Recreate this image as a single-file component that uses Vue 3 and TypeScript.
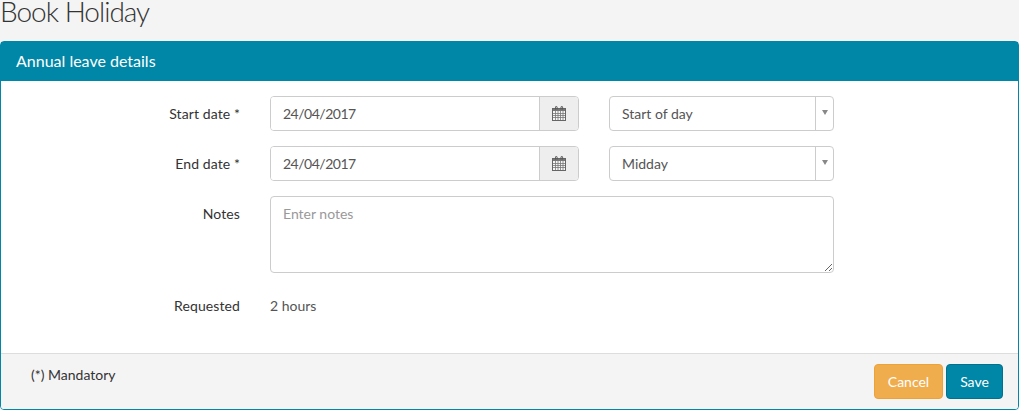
<script setup lang="ts">
const rows = [
  { label: 'Start date *', date: '24/04/2017', part: 'Start of day' },
  { label: 'End date *', date: '24/04/2017', part: 'Midday' },
]
</script>

<template>
  <div class="page">
    <h1 class="title">Book Holiday</h1>
    <section class="panel">
      <header class="head">Annual leave details</header>
      <div class="body">
        <div v-for="r in rows" :key="r.label" class="row">
          <label class="lbl">{{ r.label }}</label>
          <div class="date">
            <input class="date-input" :value="r.date" />
            <span class="addon">
              <svg width="14" height="15" viewBox="0 0 14 15" aria-hidden="true">
                <rect x="0.5" y="2.5" width="13" height="12" fill="#f6f6f6" stroke="#666" />
                <rect x="1" y="3" width="12" height="2" fill="#777" />
                <path d="M1 7.5h12M1 9.5h12M1 11.5h12M3.5 5v9M6 5v9M8.5 5v9M11 5v9" stroke="#777" stroke-width="0.8" fill="none" />
                <path d="M3.5 3.5V1.2a.8.8 0 0 1 1.6 0V3.5M9 3.5V1.2a.8.8 0 0 1 1.6 0V3.5" stroke="#555" stroke-width="1" fill="none" />
              </svg>
            </span>
          </div>
          <div class="sel">
            <span class="sel-text">{{ r.part }}</span>
            <span class="sel-arrow"><i class="tri"></i></span>
          </div>
        </div>
        <div class="row notes-row">
          <label class="lbl">Notes</label>
          <textarea class="notes" placeholder="Enter notes"></textarea>
        </div>
        <div class="row req-row">
          <label class="lbl">Requested</label>
          <span class="val">2 hours</span>
        </div>
      </div>
      <footer class="foot">
        <span class="mand">(*) Mandatory</span>
        <div class="btns">
          <button class="btn cancel" type="button">Cancel</button>
          <button class="btn save" type="button">Save</button>
        </div>
      </footer>
    </section>
  </div>
</template>

<style>
html, body { margin: 0; background: #f4f4f4; }
</style>

<style scoped>
.page {
  width: 1019px;
  height: 410px;
  overflow: hidden;
  background: #f4f4f4;
  font-family: Lato, "Liberation Sans", sans-serif;
  font-size: 14px;
  color: #333;
}
.title {
  margin: 0;
  height: 41px;
  font-size: 28px;
  font-weight: 300;
  letter-spacing: -1px;
  line-height: 23px;
  color: #333;
}
.panel {
  height: 369px;
  box-sizing: border-box;
  border: 1px solid #0086a6;
  border-radius: 4px;
  background: #fff;
  display: flex;
  flex-direction: column;
}
.head {
  height: 39px;
  background: #0086a6;
  color: #fff;
  font-size: 16px;
  line-height: 38px;
  padding-left: 15px;
  flex: none;
}
.body {
  flex: 1;
  padding-top: 15px;
}
.row {
  display: grid;
  grid-template-columns: 239px 309px 225px;
  column-gap: 30px;
  margin-bottom: 15px;
  height: 35px;
  align-items: center;
}
.lbl {
  text-align: right;
  letter-spacing: 0.1px;
  color: #333;
}
.date {
  display: flex;
  height: 35px;
  box-sizing: border-box;
  border: 1px solid #ccc;
  border-radius: 4px;
  overflow: hidden;
}
.date-input {
  flex: 1;
  min-width: 0;
  border: 0;
  outline: 0;
  padding: 0 12px;
  font: inherit;
  letter-spacing: -0.5px;
  color: #555;
  background: #fff;
}
.addon {
  width: 38px;
  flex: none;
  border-left: 1px solid #ccc;
  background: #eee;
  display: flex;
  align-items: center;
  justify-content: center;
}
.sel {
  display: flex;
  height: 35px;
  box-sizing: border-box;
  border: 1px solid #ccc;
  border-radius: 4px;
  background: #fff;
}
.sel-text {
  flex: 1;
  padding-left: 12px;
  line-height: 33px;
  color: #555;
}
.sel-arrow {
  width: 17px;
  border-left: 1px solid #ccc;
  display: flex;
  align-items: center;
  justify-content: center;
}
.tri {
  width: 0;
  height: 0;
  border-left: 3px solid transparent;
  border-right: 3px solid transparent;
  border-top: 5px solid #888;
  margin-top: -3px;
}
.notes-row {
  height: 77px;
  align-items: start;
  margin-bottom: 0;
}
.notes-row .lbl { padding-top: 9px; }
.notes {
  grid-column: 2 / span 2;
  width: 100%;
  height: 77px;
  box-sizing: border-box;
  border: 1px solid #ccc;
  border-radius: 4px;
  padding: 8px 12px;
  font: inherit;
  color: #555;
  outline: 0;
  margin: 0;
  display: block;
}
.notes::placeholder { color: #999; opacity: 1; }
.req-row {
  margin: 22px 0 0;
  height: 20px;
}
.val { color: #555; }
.foot {
  height: 56px;
  flex: none;
  box-sizing: border-box;
  border-top: 1px solid #ddd;
  background: #f4f4f4;
  border-radius: 0 0 3px 3px;
  display: flex;
  justify-content: space-between;
  padding: 10px 15px 0 30px;
}
.mand { line-height: 22px; color: #333; }
.btns { display: flex; gap: 3px; }
.btn {
  height: 35px;
  box-sizing: border-box;
  border-radius: 4px;
  border: 1px solid;
  color: #fff;
  font: inherit;
  padding: 0 12px;
}
.cancel { width: 69px; background: #f0ad4e; border-color: #eea236; }
.save { width: 57px; background: #0086a6; border-color: #00728e; }
</style>
